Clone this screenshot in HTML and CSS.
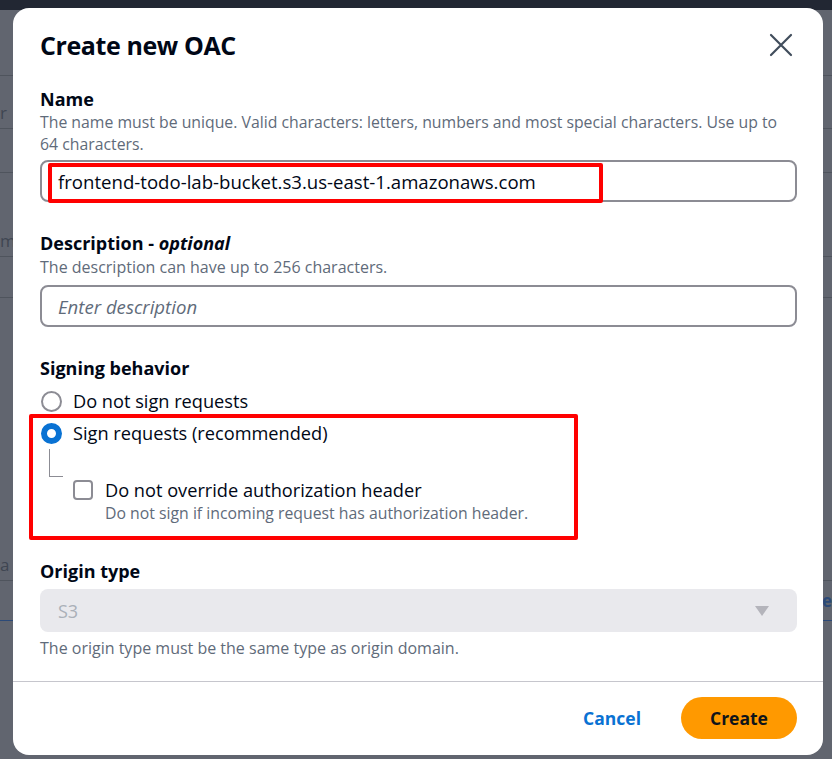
FILE: index.html
```html
<!DOCTYPE html>
<html lang="en">
<head>
<meta charset="utf-8">
<title>Create new OAC</title>
<link rel="stylesheet" href="styles.css">
</head>
<body>
<div class="page">
  <div class="page-nav"></div>
  <div class="page-row r1"></div>
  <div class="page-row r2"><span class="frag">r</span></div>
  <div class="page-row r3"></div>
  <div class="page-row r4"><span class="frag">m</span></div>
  <div class="page-row r5"></div>
  <div class="page-row r6"><span class="frag">a r</span></div>
  <div class="page-row r7"><span class="frag right">e</span></div>
</div>

<div class="modal" role="dialog" aria-labelledby="modal-title">
  <header class="modal-header">
    <h2 id="modal-title" class="modal-title">Create new OAC</h2>
    <button class="close-btn" aria-label="Close">
      <svg width="24" height="24" viewBox="0 0 24 24"><path d="M2 2 L22 22 M22 2 L2 22" stroke="#414d5c" stroke-width="2.2" fill="none" stroke-linecap="round"/></svg>
    </button>
  </header>

  <div class="modal-body">
    <div class="field name">
      <div class="label">Name</div>
      <div class="desc">The name must be unique. Valid characters: letters, numbers and most special characters. Use up to 64 characters.</div>
      <div class="input">
        <span class="input-value">frontend-todo-lab-bucket.s3.us-east-1.amazonaws.com</span>
        <span class="annot annot-name"></span>
      </div>
    </div>

    <div class="field description">
      <div class="label">Description - <em>optional</em></div>
      <div class="desc">The description can have up to 256 characters.</div>
      <div class="input"><span class="placeholder">Enter description</span></div>
    </div>

    <div class="field signing">
      <div class="label">Signing behavior</div>
      <div class="radio-group">
        <span class="annot annot-sign"></span>
        <div class="radio-row">
          <span class="radio"></span>
          <span class="opt-label">Do not sign requests</span>
        </div>
        <div class="radio-row">
          <span class="radio checked"></span>
          <span class="opt-label">Sign requests (recommended)</span>
        </div>
        <div class="sub-option">
          <span class="connector"></span>
          <div class="check-row">
            <span class="checkbox"></span>
            <div class="check-text">
              <div class="opt-label">Do not override authorization header</div>
              <div class="desc small">Do not sign if incoming request has authorization header.</div>
            </div>
          </div>
        </div>
      </div>
    </div>

    <div class="field origin">
      <div class="label">Origin type</div>
      <div class="select">
        <span class="select-value">S3</span>
        <svg class="caret" width="16" height="12" viewBox="0 0 16 12"><path d="M1 1 H15 L8 11 Z" fill="#b4b4bb"/></svg>
      </div>
      <div class="desc help">The origin type must be the same type as origin domain.</div>
    </div>
  </div>

  <footer class="modal-footer">
    <button class="btn-link">Cancel</button>
    <button class="btn-primary">Create</button>
  </footer>
</div>
</body>
</html>
```

FILE: styles.css
```css
* { box-sizing: border-box; }

html, body {
  margin: 0;
  padding: 0;
  width: 832px;
  height: 759px;
  overflow: hidden;
}

body {
  position: relative;
  font-family: "Open Sans", "Noto Sans", sans-serif;
  color: #000716;
  background: #61656f;
}

/* dimmed page behind the modal */
.page {
  display: flex;
  flex-direction: column;
}
.page-nav { height: 10px; background: #222733; }
.page-row {
  border-bottom: 1px solid #4f545d;
  position: relative;
  color: #3f4652;
  font-size: 17px;
}
.r1 { height: 66px; }
.r2 { height: 53px; }
.r3 { height: 44px; }
.r4 { height: 84px; }
.r5 { height: 41px; }
.r6 { height: 283px; }
.r7 { height: 40px; border-bottom-color: #2c4a78; }
.frag { position: absolute; left: 0; bottom: 4px; }
.frag.right { left: auto; right: 0; bottom: 8px; color: #2c4a78; font-weight: 700; }

/* modal */
.modal {
  position: absolute;
  left: 13px;
  top: 8px;
  width: 810px;
  height: 747px;
  background: #fff;
  border-radius: 16px;
  display: flex;
  flex-direction: column;
}

.modal-header {
  display: flex;
  justify-content: space-between;
  align-items: center;
  padding: 20px 30px 0 27px;
}
.modal-title {
  margin: 0;
  font-size: 25px;
  line-height: 34px;
  font-weight: 700;
  letter-spacing: -0.4px;
}
.close-btn {
  border: 0;
  background: none;
  padding: 0;
  width: 24px;
  height: 24px;
  display: flex;
}

.modal-body {
  padding: 0 26px 0 27px;
  display: flex;
  flex-direction: column;
  flex: 1;
}

.field { display: flex; flex-direction: column; }
.field.name { margin-top: 25px; }
.field.description { margin-top: 29px; }
.field.signing { margin-top: 29px; }
.field.origin { margin-top: 35px; }

.label {
  font-size: 18px;
  line-height: 24px;
  font-weight: 700;
}
.label em { font-weight: 700; }

.desc {
  font-size: 16px;
  line-height: 22px;
  color: #5f6b7a;
}
.name .desc { font-size: 15.8px; }

.input {
  position: relative;
  height: 42px;
  border: 2px solid #8c8c94;
  border-radius: 8px;
  display: flex;
  align-items: center;
  padding: 0 16px;
  font-size: 18.6px;
}
.name .input { margin-top: 5px; }
.description .input { margin-top: 7px; }
.description .desc { margin-top: 1px; }
.placeholder { font-style: italic; color: #5f6b7a; }

.annot {
  position: absolute;
  border: 4px solid #ff0000;
  border-radius: 2px;
  pointer-events: none;
}
.annot-name { left: 6px; top: 1px; width: 555px; height: 40px; }

/* signing */
.radio-group {
  position: relative;
  display: flex;
  flex-direction: column;
  margin-top: 5px;
}
.annot-sign { left: -11px; top: 29px; width: 549px; height: 126px; }

.radio-row {
  display: flex;
  align-items: center;
  gap: 11px;
  height: 32px;
}
.radio {
  width: 21px;
  height: 21px;
  border-radius: 50%;
  border: 2px solid #8c8c94;
  flex: none;
  margin-left: 1px;
}
.radio.checked {
  border: 6px solid #0972d3;
  background: #fff;
}
.opt-label { font-size: 18.2px; line-height: 24px; }

.sub-option {
  display: flex;
  align-items: flex-start;
}
.connector {
  width: 14px;
  height: 28px;
  margin-left: 9px;
  border-left: 1px solid #8c8c94;
  border-bottom: 1px solid #8c8c94;
  flex: none;
}
.check-row {
  display: flex;
  align-items: flex-start;
  gap: 12px;
  margin-top: 31px;
  margin-left: 10px;
}
.checkbox {
  width: 20px;
  height: 20px;
  border: 2px solid #8c8c94;
  border-radius: 4px;
  flex: none;
}
.check-text { margin-top: -2px; }
.desc.small { font-size: 15.8px; line-height: 22px; }

/* origin */
.select {
  margin-top: 6px;
  height: 43px;
  background: #e9e9ed;
  border-radius: 8px;
  display: flex;
  align-items: center;
  justify-content: space-between;
  padding: 0 27px 0 18px;
  font-size: 18px;
  color: #aab0b8;
}
.caret { display: block; }
.desc.help { margin-top: 5px; }

/* footer */
.modal-footer {
  border-top: 1px solid #c6c6cd;
  height: 74px;
  display: flex;
  justify-content: flex-end;
  align-items: center;
  gap: 40px;
  padding: 0 26px 2px 0;
}
.btn-link {
  border: 0;
  background: none;
  font-family: inherit;
  font-size: 17.5px;
  font-weight: 700;
  color: #0972d3;
  padding: 0;
}
.btn-primary {
  border: 0;
  background: #ff9900;
  color: #0f141a;
  font-family: inherit;
  font-size: 17.5px;
  font-weight: 700;
  width: 116px;
  height: 42px;
  border-radius: 21px;
}
```
